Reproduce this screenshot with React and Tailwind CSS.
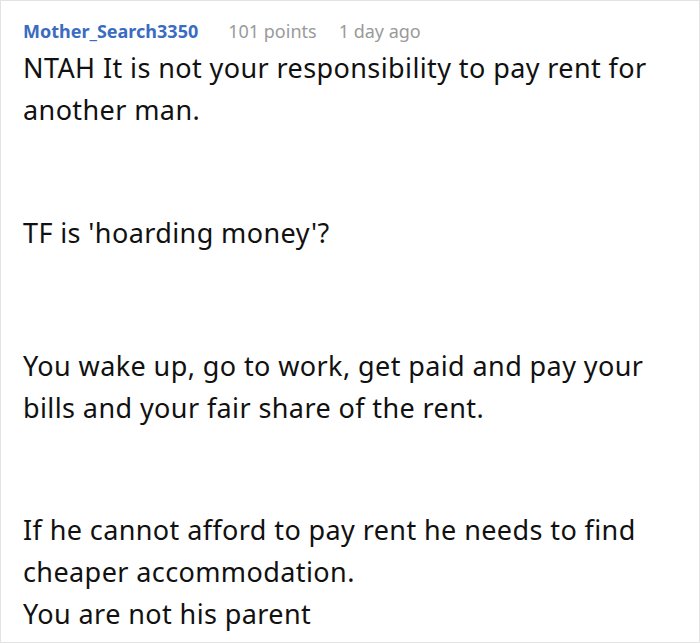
const App = () => {
  return (
    <div className="w-[700px] h-[643px] bg-white border border-[#e3e3e3] overflow-hidden" style={{ fontFamily: '"Noto Sans", "Open Sans", sans-serif' }}>
      <div className="px-[22px] pt-[17px]">
        <div className="flex items-baseline text-[18px] leading-[26px]">
          <span className="font-bold text-[#3a6cc0]">Mother_Search3350</span>
          <span className="ml-[30px] text-[#9a9a9a]">101 points</span>
          <span className="ml-[22px] text-[#9a9a9a]">1 day ago</span>
        </div>
        <div className="mt-[3px] text-[27px] leading-[42px] tracking-[0.4px] text-[#111]">
          <p>NTAH It is not your responsibility to pay rent for another man.</p>
          <p className="mt-[81px]">TF is 'hoarding money'?</p>
          <p className="mt-[91px]">You wake up, go to work, get paid and pay your bills and your fair share of the rent.</p>
          <p className="mt-[80px]">If he cannot afford to pay rent he needs to find cheaper accommodation.<br />You are not his parent</p>
        </div>
      </div>
    </div>
  );
};

export default App;
